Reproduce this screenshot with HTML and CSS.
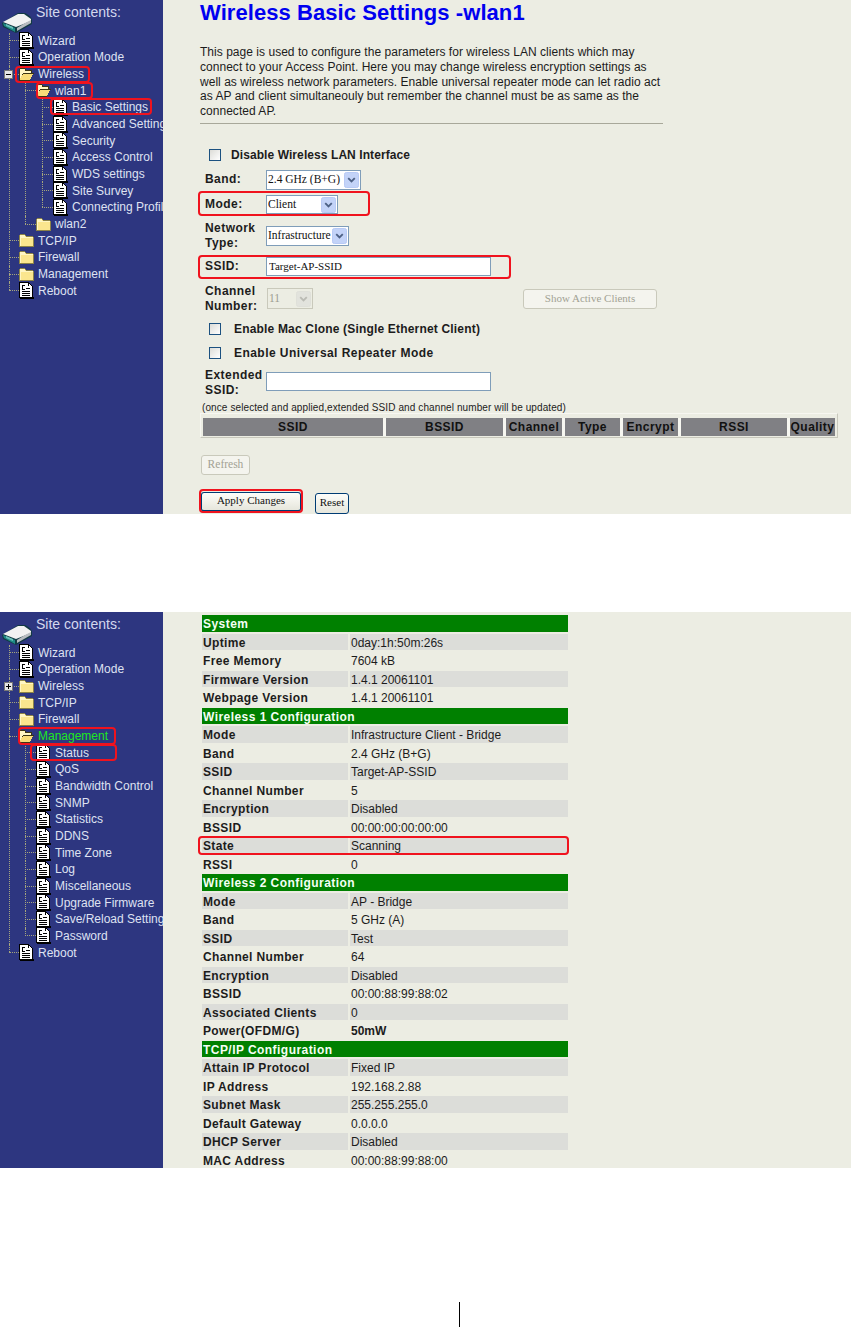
FILE: index.html
```html
<!DOCTYPE html>
<html lang="en">
<head>
<meta charset="utf-8">
<title>Wireless Basic Settings</title>
<link rel="stylesheet" href="styles.css">
</head>
<body>
<svg class="defs" width="0" height="0" aria-hidden="true">
  <symbol id="doc" viewBox="0 0 15 17" shape-rendering="crispEdges">
    <path d="M0 0H10V1H11V2H12V3H13V4H14V15H15V17H1V16H0Z" fill="#000"/>
    <path d="M1 1H9V4H13V15H1Z" fill="#fff"/>
    <path d="M10 2H11V3H12V4H10Z" fill="#fff"/>
    <path d="M3 3H6V4H4V7H6V8H3ZM7 6H11V7H7ZM3 9H11V10H3ZM3 11H11V12H3ZM3 13H11V14H3Z" fill="#000"/>
  </symbol>
  <symbol id="folder" viewBox="0 0 15 13" shape-rendering="crispEdges">
    <path d="M1 0H6V1H7V2H14V3H15V13H0V1H1Z" fill="#8c8348"/>
    <path d="M1 1H6V2H7V3H14V12H1Z" fill="#fbe68e"/>
    <path d="M1 1H6V3H1ZM1 3H14V4H1ZM1 4H2V12H1Z" fill="#fff6c4"/>
  </symbol>
  <symbol id="folder-open" viewBox="0 0 15 13" shape-rendering="crispEdges">
    <path d="M1 0H6V1H7V2H13V5H15V6H14V7H13V9H12V11H11V13H0V1H1Z" fill="#3b3514"/>
    <path d="M1 1H6V3H12V5H4V6H3V8H2V10H1Z" fill="#fff6c4"/>
    <path d="M4 6H14V7H13V9H12V11H11V12H1V10H2V8H3V7H4Z" fill="#f8dc78"/>
  </symbol>
  <symbol id="chev" viewBox="0 0 16 17">
    <rect x=".5" y=".5" width="15" height="16" rx="2" fill="#c3d3f8" stroke="#b5c8f4"/>
    <path d="M4.500 6.500L8 10L11.500 6.500" fill="none" stroke="#4d6185" stroke-width="2"/>
  </symbol>
  <symbol id="disk" viewBox="0 0 32 22">
    <path d="M1 11L17 1H24Q31 4 31 9V12L15 21L2 15Z" fill="#123a44"/>
    <path d="M2 10L17 2H23L30 7L30 9L15 15Z" fill="#f2f2f2"/>
    <path d="M24 11L30 8V11L16 19V16Z" fill="#b8bcc0"/>
    <path d="M2 11L14 16V20L3 14Z" fill="#1f8a86"/>
    <path d="M5 12L12 15V17L5 14Z" fill="#6cc0b8"/>
  </symbol>
</svg>

<section class="shot shot-settings">
  <nav class="side">
    <div class="side-head"><svg class="disk"><use href="#disk"/></svg><span>Site contents:</span></div>
    <ul class="tree">
      <li><div class="node"><i class="elbow"></i><svg class="ico"><use href="#doc"/></svg>Wizard</div></li>
      <li><div class="node"><i class="elbow"></i><svg class="ico"><use href="#doc"/></svg>Operation Mode</div></li>
      <li><div class="node"><b class="box"></b><i class="elbow"></i><svg class="ico"><use href="#folder-open"/></svg>Wireless</div>
        <ul class="sub">
          <li><div class="node"><i class="elbow"></i><svg class="ico"><use href="#folder-open"/></svg>wlan1</div>
            <ul class="sub deep">
              <li><div class="node"><i class="elbow"></i><svg class="ico"><use href="#doc"/></svg>Basic Settings</div></li>
              <li><div class="node"><i class="elbow"></i><svg class="ico"><use href="#doc"/></svg>Advanced Settings</div></li>
              <li><div class="node"><i class="elbow"></i><svg class="ico"><use href="#doc"/></svg>Security</div></li>
              <li><div class="node"><i class="elbow"></i><svg class="ico"><use href="#doc"/></svg>Access Control</div></li>
              <li><div class="node"><i class="elbow"></i><svg class="ico"><use href="#doc"/></svg>WDS settings</div></li>
              <li><div class="node"><i class="elbow"></i><svg class="ico"><use href="#doc"/></svg>Site Survey</div></li>
              <li><div class="node"><i class="elbow"></i><svg class="ico"><use href="#doc"/></svg>Connecting Profile</div></li>
            </ul>
          </li>
          <li><div class="node"><i class="elbow"></i><svg class="ico"><use href="#folder"/></svg>wlan2</div></li>
        </ul>
      </li>
      <li><div class="node"><i class="elbow"></i><svg class="ico"><use href="#folder"/></svg>TCP/IP</div></li>
      <li><div class="node"><i class="elbow"></i><svg class="ico"><use href="#folder"/></svg>Firewall</div></li>
      <li><div class="node"><i class="elbow"></i><svg class="ico"><use href="#folder"/></svg>Management</div></li>
      <li><div class="node"><i class="elbow"></i><svg class="ico"><use href="#doc"/></svg>Reboot</div></li>
    </ul>
  </nav>

  <main class="main main-settings">
    <h1 class="title">Wireless Basic Settings -wlan1</h1>
    <p class="intro">This page is used to configure the parameters for wireless LAN clients which may<br>connect to your Access Point. Here you may change wireless encryption settings as<br>well as wireless network parameters. Enable universal repeater mode can let radio act<br>as AP and client simultaneouly but remember the channel must be as same as the<br>connected AP.</p>
    <hr class="rule">
    <div class="form">
      <label class="check check-first"><span class="box-check"></span>Disable Wireless LAN Interface</label>
      <div class="row r-band"><span class="lbl">Band:</span>
        <div class="sel w-band"><select><option>2.4 GHz (B+G)</option></select><svg class="chev"><use href="#chev"/></svg></div></div>
      <div class="row r-mode"><span class="lbl">Mode:</span>
        <div class="sel w-mode"><select><option>Client</option></select><svg class="chev"><use href="#chev"/></svg></div></div>
      <div class="row r-type"><span class="lbl">Network Type:</span>
        <div class="sel w-type"><select><option>Infrastructure</option></select><svg class="chev"><use href="#chev"/></svg></div></div>
      <div class="row r-ssid"><span class="lbl">SSID:</span><input class="text" type="text" value="Target-AP-SSID"></div>
      <div class="row r-chan"><span class="lbl">Channel Number:</span>
        <div class="sel sel-off w-chan"><select disabled><option>11</option></select><svg class="chev"><use href="#chev"/></svg></div>
        <button class="btn btn-clients" disabled>Show Active Clients</button></div>
      <label class="check check-mac"><span class="box-check"></span>Enable Mac Clone (Single Ethernet Client)</label>
      <label class="check check-rep"><span class="box-check"></span>Enable Universal Repeater Mode</label>
      <div class="row r-ext"><span class="lbl">Extended SSID:</span><input class="text" type="text"></div>
      <p class="note">(once selected and applied,extended SSID and channel number will be updated)</p>
      <table class="survey">
        <tr><th class="c1">SSID</th><th class="c2">BSSID</th><th class="c3">Channel</th><th class="c4">Type</th><th class="c5">Encrypt</th><th class="c6">RSSI</th><th class="c7">Quality</th></tr>
      </table>
      <button class="btn btn-refresh" disabled>Refresh</button>
      <div class="actions"><button class="btn btn-apply">Apply Changes</button><button class="btn btn-reset">Reset</button></div>
    </div>
  </main>

  <i class="ring ring-wireless"></i><i class="ring ring-wlan"></i><i class="ring ring-basic"></i>
  <i class="ring ring-mode"></i><i class="ring ring-ssid"></i><i class="ring ring-apply"></i>
</section>

<section class="shot shot-status">
  <nav class="side">
    <div class="side-head"><svg class="disk"><use href="#disk"/></svg><span>Site contents:</span></div>
    <ul class="tree">
      <li><div class="node"><i class="elbow"></i><svg class="ico"><use href="#doc"/></svg>Wizard</div></li>
      <li><div class="node"><i class="elbow"></i><svg class="ico"><use href="#doc"/></svg>Operation Mode</div></li>
      <li><div class="node"><b class="box plus"></b><i class="elbow"></i><svg class="ico"><use href="#folder"/></svg>Wireless</div></li>
      <li><div class="node"><i class="elbow"></i><svg class="ico"><use href="#folder"/></svg>TCP/IP</div></li>
      <li><div class="node"><i class="elbow"></i><svg class="ico"><use href="#folder"/></svg>Firewall</div></li>
      <li><div class="node active"><i class="elbow"></i><svg class="ico"><use href="#folder-open"/></svg>Management</div>
        <ul class="sub">
          <li><div class="node"><i class="elbow"></i><svg class="ico"><use href="#doc"/></svg>Status</div></li>
          <li><div class="node"><i class="elbow"></i><svg class="ico"><use href="#doc"/></svg>QoS</div></li>
          <li><div class="node"><i class="elbow"></i><svg class="ico"><use href="#doc"/></svg>Bandwidth Control</div></li>
          <li><div class="node"><i class="elbow"></i><svg class="ico"><use href="#doc"/></svg>SNMP</div></li>
          <li><div class="node"><i class="elbow"></i><svg class="ico"><use href="#doc"/></svg>Statistics</div></li>
          <li><div class="node"><i class="elbow"></i><svg class="ico"><use href="#doc"/></svg>DDNS</div></li>
          <li><div class="node"><i class="elbow"></i><svg class="ico"><use href="#doc"/></svg>Time Zone</div></li>
          <li><div class="node"><i class="elbow"></i><svg class="ico"><use href="#doc"/></svg>Log</div></li>
          <li><div class="node"><i class="elbow"></i><svg class="ico"><use href="#doc"/></svg>Miscellaneous</div></li>
          <li><div class="node"><i class="elbow"></i><svg class="ico"><use href="#doc"/></svg>Upgrade Firmware</div></li>
          <li><div class="node"><i class="elbow"></i><svg class="ico"><use href="#doc"/></svg>Save/Reload Settings</div></li>
          <li><div class="node"><i class="elbow"></i><svg class="ico"><use href="#doc"/></svg>Password</div></li>
        </ul>
      </li>
      <li><div class="node"><i class="elbow"></i><svg class="ico"><use href="#doc"/></svg>Reboot</div></li>
    </ul>
  </nav>

  <main class="main main-status">
    <table class="status">
      <colgroup><col class="col-key"><col class="col-val"></colgroup>
      <tr class="head"><td colspan="2">System</td></tr>
      <tr class="alt"><th>Uptime</th><td>0day:1h:50m:26s</td></tr>
      <tr><th>Free Memory</th><td>7604 kB</td></tr>
      <tr class="alt"><th>Firmware Version</th><td>1.4.1 20061101</td></tr>
      <tr><th>Webpage Version</th><td>1.4.1 20061101</td></tr>
      <tr class="head"><td colspan="2">Wireless 1 Configuration</td></tr>
      <tr class="alt"><th>Mode</th><td>Infrastructure Client - Bridge</td></tr>
      <tr><th>Band</th><td>2.4 GHz (B+G)</td></tr>
      <tr class="alt"><th>SSID</th><td>Target-AP-SSID</td></tr>
      <tr><th>Channel Number</th><td>5</td></tr>
      <tr class="alt"><th>Encryption</th><td>Disabled</td></tr>
      <tr><th>BSSID</th><td>00:00:00:00:00:00</td></tr>
      <tr class="alt"><th>State</th><td>Scanning</td></tr>
      <tr><th>RSSI</th><td>0</td></tr>
      <tr class="head"><td colspan="2">Wireless 2 Configuration</td></tr>
      <tr class="alt"><th>Mode</th><td>AP - Bridge</td></tr>
      <tr><th>Band</th><td>5 GHz (A)</td></tr>
      <tr class="alt"><th>SSID</th><td>Test</td></tr>
      <tr><th>Channel Number</th><td>64</td></tr>
      <tr class="alt"><th>Encryption</th><td>Disabled</td></tr>
      <tr><th>BSSID</th><td>00:00:88:99:88:02</td></tr>
      <tr class="alt"><th>Associated Clients</th><td>0</td></tr>
      <tr><th>Power(OFDM/G)</th><td class="strong">50mW</td></tr>
      <tr class="head"><td colspan="2">TCP/IP Configuration</td></tr>
      <tr class="alt"><th>Attain IP Protocol</th><td>Fixed IP</td></tr>
      <tr><th>IP Address</th><td>192.168.2.88</td></tr>
      <tr class="alt"><th>Subnet Mask</th><td>255.255.255.0</td></tr>
      <tr><th>Default Gateway</th><td>0.0.0.0</td></tr>
      <tr class="alt"><th>DHCP Server</th><td>Disabled</td></tr>
      <tr><th>MAC Address</th><td>00:00:88:99:88:00</td></tr>
    </table>
  </main>

  <i class="ring ring-mgmt"></i><i class="ring ring-status"></i><i class="ring ring-state"></i>
</section>

<div class="page-rule"></div>
</body>
</html>
```
FILE: styles.css
```css
* { box-sizing: border-box; }
html, body { margin: 0; padding: 0; background: #fff; }
body { font-family: "Liberation Sans", Arial, sans-serif; font-size: 12px; color: #1c1c1c; height: 1327px; overflow: hidden; }
.defs { position: absolute; }

.shot { position: relative; display: flex; background: #ecede3; overflow: hidden; }
.shot-settings { height: 514px; }
.shot-status { height: 556px; margin-top: 98px; }

/* sidebar */
.side { flex: 0 0 163px; width: 163px; background: #2d3680; color: #dfe2f2; overflow: hidden; }
.side-head { display: flex; height: 32.5px; position: relative; }
.side-head span { font-size: 14px; margin: 4px 0 0 3px; color: #d4d8ee; }
.disk { width: 32px; height: 22px; margin: 12px 0 0 1px; flex: none; }
.tree, .sub { list-style: none; margin: 0; padding: 0; }
.tree { margin-left: 9px; }
.sub { margin-left: 16px; }
.sub .elbow { width: 11px; }
.sub.deep { margin-left: 17px; }
.tree li { position: relative; }
.tree li::before { content: ""; position: absolute; left: 0; top: 0; bottom: 0; border-left: 1px dotted #a6a67c; }
.tree li:last-child::before { bottom: auto; height: 8px; }
.node { position: relative; display: flex; align-items: center; height: 16.67px; white-space: nowrap; }
.elbow { flex: none; width: 10px; border-bottom: 1px dotted #a6a67c; }
.ico { flex: none; width: 15px; height: 17px; margin-right: 4px; }
.active { color: #1ee81e; }
.box { position: absolute; left: -5px; top: 4px; z-index: 1; width: 9px; height: 9px; background: #e6e6e6; border: 1px solid #777; }
.box::before { content: ""; position: absolute; left: 1px; top: 3px; width: 5px; height: 1px; background: #000; }
.box.plus::after { content: ""; position: absolute; left: 3px; top: 1px; width: 1px; height: 5px; background: #000; }

/* settings */
.main { flex: 1; min-width: 0; }
.main-settings { padding-left: 37px; }
.title { margin: 0; font-size: 22px; line-height: 25px; font-weight: bold; letter-spacing: .07px; color: #0000f0; }
.intro { margin: 20px 0 0; line-height: 14.8px; letter-spacing: .03px; white-space: nowrap; }
.rule { width: 463px; height: 1px; margin: 4px 0 0; border: 0; background: #a8a89a; }
.form { position: relative; }
.check { display: flex; align-items: center; height: 16px; font-weight: bold; padding-left: 9px; }
.check-first { margin-top: 23px; letter-spacing: .08px; }
.check-mac { margin-top: 7.5px; letter-spacing: .18px; }
.check-rep { margin-top: 8px; letter-spacing: .45px; }
.box-check { width: 12px; height: 12px; margin-right: 10px; border: 1px solid #1c5180; background: linear-gradient(135deg, #dcdcd7, #fff); flex: none; }
.check-mac .box-check, .check-rep .box-check { margin-right: 13px; }
.row { display: flex; align-items: center; padding-left: 5px; }
.lbl { flex: 0 0 61px; font-weight: bold; letter-spacing: .45px; line-height: 15px; }
.r-band { height: 20px; margin-top: 7px; }
.r-mode { height: 19px; margin-top: 5.500px; }
.r-type { height: 28px; margin-top: 7.500px; }
.r-ssid { height: 19px; margin-top: 7.500px; }
.r-chan { height: 29px; margin-top: 8px; }
.r-ext { height: 28px; margin-top: 8px; }
.r-ext .text { margin-bottom: 2px; }
.sel { position: relative; height: 20px; border: 1px solid #7f9db9; background: #fff; }
.sel select { appearance: none; -webkit-appearance: none; display: block; width: 100%; height: 100%; padding: 0 0 2px 1px; border: 0; background: transparent; font: 11.500px "Liberation Serif", serif; color: #111; outline: 0; }
.chev { position: absolute; right: 1px; top: 1px; width: 15px; height: 16px; }
.w-band { width: 95px; }
.w-mode { width: 72px; height: 19px; }
.w-type { width: 83px; }
.w-chan { width: 46px; height: 21px; margin-left: 1px; border-color: #c9c9bb; background: #ecede3; }
.sel-off select { color: #9c9c90; opacity: 1; }
.sel-off .chev { opacity: .35; filter: grayscale(1); top: 2px; }
.text { width: 225px; height: 19px; border: 1px solid #7f9db9; background: #fff; padding: 0 2px 2px; font: 11px "Liberation Serif", serif; color: #111; outline: 0; }
.btn { display: block; padding: 0 0 2px; font: 11px "Liberation Serif", serif; color: #111; border: 1px solid #003c74; border-radius: 3px; background: linear-gradient(#fdfdf9, #e6e6dc); }
.btn:disabled { border-color: #c9c9bb; background: #f4f4ee; color: #a2a294; }
.btn-clients { width: 134px; height: 20px; margin-left: 210px; }
.note { margin: 5px 0 0 2px; height: 12px; font-size: 10px; line-height: 12px; letter-spacing: .1px; white-space: nowrap; }
.survey { width: 638px; height: 25px; margin-top: -1px; table-layout: fixed; border-collapse: separate; border-spacing: 0; padding: 4px 2px 1px 2px; border: 1px solid; border-color: #f7f7f1 #c8c8bc #c8c8bc #f7f7f1; }
.survey th { background: #808084; color: #111; font-size: 12px; font-weight: bold; letter-spacing: .45px; height: 18px; padding: 0; border-right: 3px solid #f7f7f1; white-space: nowrap; overflow: hidden; }
.survey th:last-child { border-right: 0; }
.c1 { width: 183px; } .c2 { width: 120px; } .c3 { width: 59px; } .c4 { width: 58px; } .c5 { width: 58px; } .c6 { width: 109px; } .c7 { width: 45px; }
.btn-refresh { width: 49px; height: 20px; margin: 17px 0 0 1px; font-size: 11.500px; }
.actions { display: flex; margin: 17px 0 0 1px; align-items: flex-start; }
.btn-apply { width: 100px; height: 20px; border-width: 1px 1px 2px; }
.btn-reset { width: 34px; height: 21px; margin: 1px 0 0 14px; }

/* status */
.main-status { padding: 1px 0 0 37px; }
.status { width: 370px; table-layout: fixed; border-collapse: separate; border-spacing: 2px; }
.col-key { width: 146px; }
.col-val { width: 218px; }
.status th, .status td { height: 16.52px; padding: 2px 1px 0; line-height: 14.500px; font-size: 12px; text-align: left; white-space: nowrap; overflow: hidden; }
.status th { font-weight: bold; letter-spacing: .35px; }
.status tr.head td { background: #008000; color: #f4fff4; font-weight: bold; letter-spacing: .45px; }
.status .strong { font-weight: bold; }
.status tr.alt > * { background: #dcddd9; }

/* red call-outs laid over the capture */
.ring { position: absolute; border: 2px solid #f0131e; border-radius: 4px; pointer-events: none; }
.ring-wireless { left: 15px; top: 66px; width: 75px; height: 17px; }
.ring-wlan { left: 36px; top: 82px; width: 57px; height: 17px; }
.ring-basic { left: 50px; top: 98px; width: 102px; height: 17px; }
.ring-mode { left: 198px; top: 191px; width: 172px; height: 25px; }
.ring-ssid { left: 198px; top: 255px; width: 313px; height: 24px; }
.ring-apply { left: 199px; top: 489px; width: 104px; height: 24px; }
.ring-mgmt { left: 18px; top: 115px; width: 98px; height: 18px; }
.ring-status { left: 30px; top: 132px; width: 87px; height: 17px; }
.ring-state { left: 198px; top: 224px; width: 371px; height: 19px; }

.page-rule { width: 1px; height: 25px; margin: 134px 0 0 459px; background: #000; }
```
